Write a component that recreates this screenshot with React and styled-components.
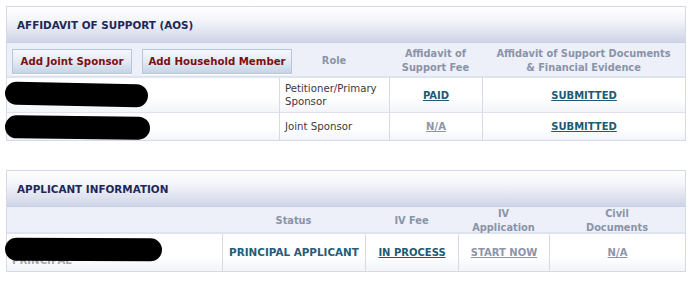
import React from "react";
import styled, { createGlobalStyle } from "styled-components";

const Global = createGlobalStyle`
  *, *::before, *::after { box-sizing: border-box; }
  body {
    margin: 0;
    background: #ffffff;
    font-family: Verdana, "DejaVu Sans", sans-serif;
    font-size: 10px;
  }
`;

function App() {
  return (
    <Page>
      <Global />
      <Panel>
        <PanelHead>AFFIDAVIT OF SUPPORT (AOS)</PanelHead>
        <Grid cols="272px 110px 93px 1fr">
          <HeadCell first align="flex-start" pad="4px">
            <ButtonRow>
              <ActionButton w="120px">Add Joint Sponsor</ActionButton>
              <ActionButton w="150px">Add Household Member</ActionButton>
            </ButtonRow>
          </HeadCell>
          <HeadCell>Role</HeadCell>
          <HeadCell>Affidavit of<br />Support Fee</HeadCell>
          <HeadCell>Affidavit of Support Documents<br />&amp; Financial Evidence</HeadCell>

          <Cell first h="35px">
            <Redact w="143px" top="5px" tilt="1.2deg" />
          </Cell>
          <Cell h="35px" left>Petitioner/Primary<br />Sponsor</Cell>
          <Cell h="35px"><StatusLink>PAID</StatusLink></Cell>
          <Cell h="35px"><StatusLink>SUBMITTED</StatusLink></Cell>

          <Cell first h="27px" last>
            <Redact w="145px" top="3px" tilt="0.6deg" />
          </Cell>
          <Cell h="27px" left last>Joint Sponsor</Cell>
          <Cell h="27px" last><StatusLink muted>N/A</StatusLink></Cell>
          <Cell h="27px" last><StatusLink>SUBMITTED</StatusLink></Cell>
        </Grid>
      </Panel>

      <Panel second>
        <PanelHead>APPLICANT INFORMATION</PanelHead>
        <Grid cols="215px 143px 93px 91px 1fr">
          <HeadCell first h="27px" />
          <HeadCell h="27px">Status</HeadCell>
          <HeadCell h="27px">IV Fee</HeadCell>
          <HeadCell h="27px">IV<br />Application</HeadCell>
          <HeadCell h="27px">Civil<br />Documents</HeadCell>

          <Cell first h="37px" last left align="flex-end">
            <Hidden>PRINCIPAL</Hidden>
            <Redact w="157px" top="4px" tilt="0.3deg" />
          </Cell>
          <Cell h="37px" last><Strong>PRINCIPAL APPLICANT</Strong></Cell>
          <Cell h="37px" last><StatusLink>IN PROCESS</StatusLink></Cell>
          <Cell h="37px" last><StatusLink muted>START NOW</StatusLink></Cell>
          <Cell h="37px" last><StatusLink muted>N/A</StatusLink></Cell>
        </Grid>
      </Panel>
    </Page>
  );
}

export default App;

const Page = styled.div`
  padding: 6px 0 0 6px;
  width: 686px;
`;

const Panel = styled.div`
  border: 1px solid #d5d9e8;
  margin-top: ${(p) => (p.second ? "29px" : "0")};
`;

const PanelHead = styled.div`
  height: 36px;
  display: flex;
  align-items: center;
  padding-left: 10px;
  padding-top: 1px;
  background: linear-gradient(#ffffff 0%, #f3f4f9 40%, #cfd4e7 100%);
  color: #1c2858;
  font-weight: bold;
  font-size: 10.4px;
  border-bottom: 1px solid #c9cfe3;
`;

const Grid = styled.div`
  display: grid;
  grid-template-columns: ${(p) => p.cols};
`;

const HeadCell = styled.div`
  height: ${(p) => p.h || "35px"};
  background: #edf0f8;
  border-bottom: 2px solid #dfe3ef;
  display: flex;
  align-items: center;
  justify-content: ${(p) => p.align || "center"};
  padding-top: ${(p) => p.pad || "3px"};
  text-align: center;
  color: #8a93a9;
  font-weight: bold;
  font-size: 9.8px;
  line-height: 14px;
`;

const ButtonRow = styled.div`
  position: relative;
  z-index: 1;
  display: flex;
  gap: 10px;
  padding-left: 5px;
`;

const ActionButton = styled.button`
  flex: none;
  width: ${(p) => p.w};
  height: 25px;
  padding: 0;
  white-space: nowrap;
  border: 1px solid #b9c5d9;
  background: linear-gradient(#f6f8fc 0%, #e3eaf3 50%, #c5d5e5 100%);
  color: #7c0f12;
  font-family: Verdana, "DejaVu Sans", sans-serif;
  font-weight: bold;
  font-size: 10.2px;
  box-shadow: 0 1px 0 #ffffff;
`;

const Cell = styled.div`
  position: relative;
  height: ${(p) => p.h};
  border-left: ${(p) => (p.first ? "none" : "1px solid #d7dbe8")};
  border-bottom: ${(p) => (p.last ? "none" : "1px solid #dfe2ee")};
  background: linear-gradient(#ffffff 60%, #f2f4f9 100%);
  display: flex;
  align-items: ${(p) => p.align || "center"};
  justify-content: ${(p) => (p.left ? "flex-start" : "center")};
  padding-left: ${(p) => (p.left ? "5px" : "0")};
  color: #3a3a3a;
  font-size: 10.2px;
  line-height: 13px;
`;

const StatusLink = styled.a`
  color: ${(p) => (p.muted ? "#8c95a9" : "#1e5a70")};
  font-weight: bold;
  text-decoration: underline;
  font-size: 10px;
`;

const Strong = styled.span`
  color: #255d74;
  font-weight: bold;
  font-size: 10.4px;
`;

const Hidden = styled.span`
  color: #a4a8b0;
  font-weight: bold;
  padding-bottom: 4px;
`;

const Redact = styled.span`
  position: absolute;
  left: -2px;
  top: ${(p) => p.top};
  width: ${(p) => p.w};
  height: 23px;
  background: #000000;
  border-radius: 12px;
  transform: rotate(${(p) => p.tilt});
`;
